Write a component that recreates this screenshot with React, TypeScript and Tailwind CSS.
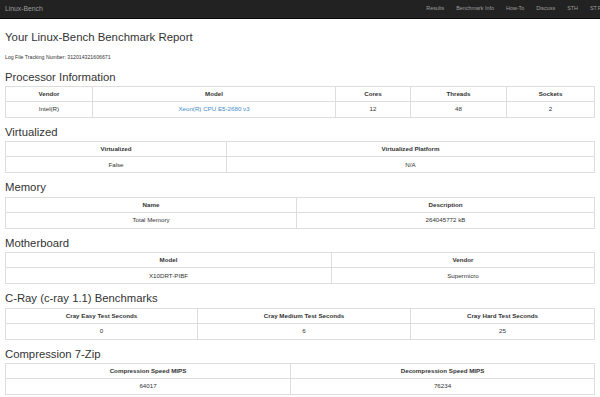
const navLinks = ["Results", "Benchmark Info", "How-To", "Discuss", "STH", "ST.Forums"];

type Col = { label: string; value: string; width: string; link?: boolean };

const sections: { title: string; cols: Col[] }[] = [
  {
    title: "Processor Information",
    cols: [
      { label: "Vendor", value: "Intel(R)", width: "w-[87px]" },
      { label: "Model", value: "Xeon(R) CPU E5-2680 v3", width: "w-[243px]", link: true },
      { label: "Cores", value: "12", width: "w-[75px]" },
      { label: "Threads", value: "48", width: "w-[96px]" },
      { label: "Sockets", value: "2", width: "w-auto" },
    ],
  },
  {
    title: "Virtualized",
    cols: [
      { label: "Virtualized", value: "False", width: "w-[221px]" },
      { label: "Virtualized Platform", value: "N/A", width: "w-auto" },
    ],
  },
  {
    title: "Memory",
    cols: [
      { label: "Name", value: "Total Memory", width: "w-[291px]" },
      { label: "Description", value: "264045772 kB", width: "w-auto" },
    ],
  },
  {
    title: "Motherboard",
    cols: [
      { label: "Model", value: "X10DRT-PIBF", width: "w-[326px]" },
      { label: "Vendor", value: "Supermicro", width: "w-auto" },
    ],
  },
  {
    title: "C-Ray (c-ray 1.1) Benchmarks",
    cols: [
      { label: "Cray Easy Test Seconds", value: "0", width: "w-[192px]" },
      { label: "Cray Medium Test Seconds", value: "6", width: "w-[213px]" },
      { label: "Cray Hard Test Seconds", value: "25", width: "w-auto" },
    ],
  },
  {
    title: "Compression 7-Zip",
    cols: [
      { label: "Compression Speed MIPS", value: "64017", width: "w-[285px]" },
      { label: "Decompression Speed MIPS", value: "76234", width: "w-auto" },
    ],
  },
];

const App = () => {
  return (
    <div className="min-h-[397px] bg-white font-['Liberation_Sans',Arial,sans-serif] text-[#333]">
      {/* Navbar */}
      <nav className="flex h-[19px] items-center overflow-hidden whitespace-nowrap border-b border-[#080808] bg-[#222]">
        <span className="pl-[5px] text-[6.8px] leading-none text-[#9d9d9d]">Linux-Bench</span>
        <div className="ml-auto flex translate-x-[22px]">
          {navLinks.map((l) => (
            <span key={l} className="px-[6px] text-[5.4px] leading-none text-[#9d9d9d]">
              {l}
            </span>
          ))}
        </div>
      </nav>

      <div className="px-[5px]">
        <h1 className="mt-[12px] text-[11.4px] leading-[12.4px]">Your Linux-Bench Benchmark Report</h1>
        <p className="mt-[12px] text-[5.2px] leading-[5.2px]">Log File Tracking Number: 312014321606671</p>

        {sections.map((s, i) => (
          <div key={s.title}>
            <h2
              className={
                i === 0
                  ? "mt-[10px] mb-[3px] text-[11.3px] leading-[12.4px]"
                  : "mt-[8px] mb-[3px] text-[11.3px] leading-[12.4px]"
              }
            >
              {s.title}
            </h2>
            <table className="w-full table-fixed border-collapse border border-[#ddd] text-[6.2px] leading-none">
              <thead>
                <tr className="h-[15px]">
                  {s.cols.map((c) => (
                    <th key={c.label} className={`${c.width} border border-[#ddd] p-0 text-center font-bold`}>
                      {c.label}
                    </th>
                  ))}
                </tr>
              </thead>
              <tbody>
                <tr className="h-[16px]">
                  {s.cols.map((c) => (
                    <td key={c.label} className="border border-[#ddd] p-0 text-center">
                      {c.link ? <span className="text-[#428bca]">{c.value}</span> : c.value}
                    </td>
                  ))}
                </tr>
              </tbody>
            </table>
          </div>
        ))}
      </div>
    </div>
  );
};

export default App;
